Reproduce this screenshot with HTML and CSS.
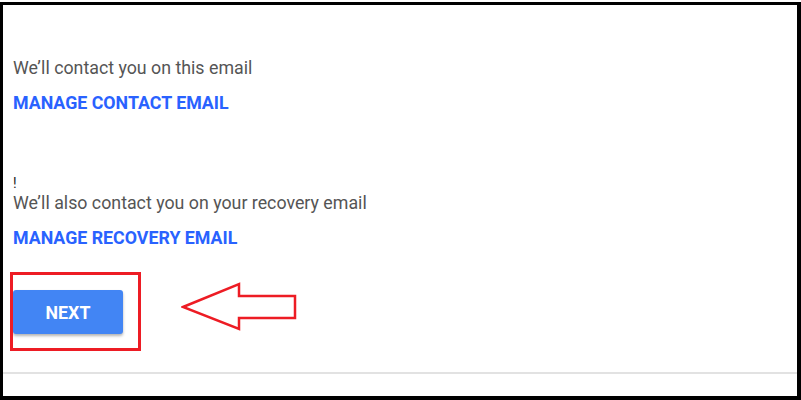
FILE: index.html
```html
<!DOCTYPE html>
<html>
<head>
<meta charset="utf-8">
<link rel="stylesheet" href="styles.css">
</head>
<body>
<div class="frame">
  <div class="content">
    <p class="note">We’ll contact you on this email</p>
    <a class="link" href="#">MANAGE CONTACT EMAIL</a>
    <span class="bang">!</span>
    <p class="note">We’ll also contact you on your recovery email</p>
    <a class="link second" href="#">MANAGE RECOVERY EMAIL</a>
    <div class="actions">
      <button class="next">NEXT</button>
      <div class="highlight"></div>
      <svg class="arrow" width="120" height="56" viewBox="0 0 120 56">
        <polygon points="2,27 58,4 58,16 114,16 114,38 58,38 58,49" fill="none" stroke="#ed1c24" stroke-width="2.5" stroke-linejoin="miter"/>
      </svg>
    </div>
  </div>
  <div class="divider"></div>
</div>
</body>
</html>
```
FILE: styles.css
```css
html, body {
  margin: 0;
  padding: 0;
  background: #ffffff;
}
body {
  width: 801px;
  height: 400px;
  overflow: hidden;
  padding-top: 2px;
  box-sizing: border-box;
}
.frame {
  box-sizing: border-box;
  width: 801px;
  height: 398px;
  border-style: solid;
  border-color: #000;
  border-width: 3px 4px 4px 3px;
  display: flex;
  flex-direction: column;
  font-family: Roboto, "Liberation Sans", sans-serif;
}
.content {
  display: flex;
  flex-direction: column;
  align-items: flex-start;
  padding: 52px 0 0 10px;
  height: 317px;
  box-sizing: border-box;
}
.note {
  margin: 0;
  font-size: 17.8px;
  line-height: 22px;
  color: #555555;
}
.link {
  margin-top: 13px;
  font-size: 17.8px;
  line-height: 22px;
  font-weight: 700;
  color: #2962ff;
  text-decoration: none;
}
.link.second {
  margin-top: 13px;
}
.bang {
  margin-top: 62px;
  font-size: 14px;
  line-height: 14px;
  color: #222;
  height: 14px;
  margin-bottom: 2px;
}
.actions {
  position: relative;
  margin-top: 41px;
}
.next {
  display: block;
  width: 110px;
  height: 44px;
  border: none;
  border-radius: 3px;
  background: #4285f4;
  color: #ffffff;
  font-family: Roboto, "Liberation Sans", sans-serif;
  font-size: 17.8px;
  font-weight: 700;
  box-shadow: 0 2px 3px rgba(0, 0, 0, 0.3);
  padding: 0;
}
.highlight {
  position: absolute;
  left: -3px;
  top: -18px;
  width: 131px;
  height: 79px;
  box-sizing: border-box;
  border: 3px solid #ed1c24;
}
.arrow {
  position: absolute;
  left: 168px;
  top: -10px;
}
.divider {
  height: 2px;
  background: #e2e2e2;
  margin-top: 50px;
}
```
